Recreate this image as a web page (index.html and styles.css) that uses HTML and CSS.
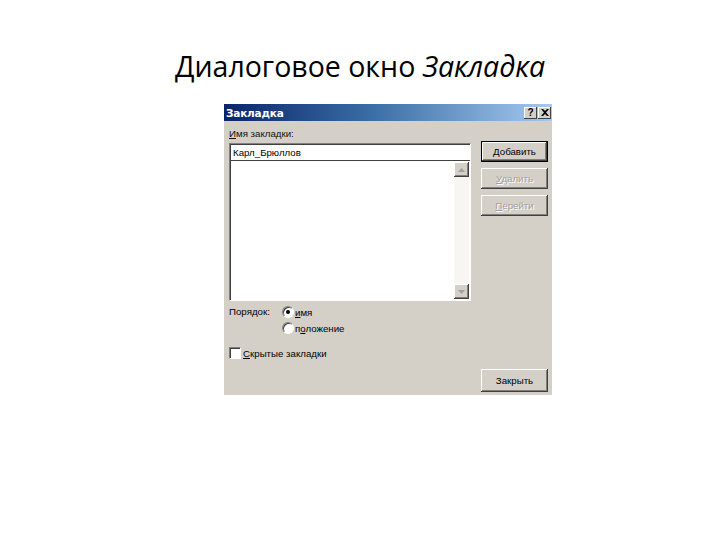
FILE: index.html
```html
<!DOCTYPE html>
<html lang="ru">
<head>
<meta charset="utf-8">
<link rel="stylesheet" href="styles.css">
</head>
<body>
<h1 class="slide-title">Диалоговое окно <em>Закладка</em></h1>
<div class="dialog">
  <div class="titlebar">
    <span class="title-text">Закладка</span>
    <div class="title-buttons">
      <span class="tb-btn">?</span>
      <span class="tb-btn tb-close">
        <svg width="8" height="7" viewBox="0 0 8 7"><path d="M0 0h2l2 2 2-2h2L5 3.5 8 7H6L4 5 2 7H0l3-3.5z" fill="#000"/></svg>
      </span>
    </div>
  </div>
  <div class="dlg-body">
    <div class="main-grid">
      <div class="left-col">
        <div class="label"><u>И</u>мя закладки:</div>
        <div class="textbox">Карл_Брюллов</div>
        <div class="listbox">
          <div class="list-area"></div>
          <div class="scrollbar">
            <div class="sb-btn">
              <svg width="7" height="4" viewBox="0 0 7 4"><path d="M3.5 0L7 4H0z" fill="#a0a0a0"/></svg>
            </div>
            <div class="sb-track"></div>
            <div class="sb-btn">
              <svg width="7" height="4" viewBox="0 0 7 4"><path d="M0 0h7L3.5 4z" fill="#a0a0a0"/></svg>
            </div>
          </div>
        </div>
      </div>
      <div class="right-col">
        <div class="btn btn-default"><span><u>Д</u>обавить</span></div>
        <div class="btn btn-disabled"><span><u>У</u>далить</span></div>
        <div class="btn btn-disabled"><span><u>П</u>ерейти</span></div>
      </div>
    </div>
    <div class="order">
      <div class="order-label">Порядок:</div>
      <div class="radios">
        <div class="radio-row"><span class="radio checked"></span><span><u>и</u>мя</span></div>
        <div class="radio-row"><span class="radio"></span><span>п<u>о</u>ложение</span></div>
      </div>
    </div>
    <div class="check-row"><span class="checkbox"></span><span><u>С</u>крытые закладки</span></div>
    <div class="bottom-row">
      <div class="btn"><span>Закрыть</span></div>
    </div>
  </div>
</div>
</body>
</html>
```
FILE: styles.css
```css
html, body {
  margin: 0;
  padding: 0;
  background: #ffffff;
}
body {
  width: 720px;
  height: 540px;
  overflow: hidden;
}
.slide-title {
  margin: 0;
  padding-top: 49px;
  height: 104px;
  box-sizing: border-box;
  text-align: center;
  font-family: "Open Sans", "DejaVu Sans", sans-serif;
  font-weight: 400;
  font-size: 28.5px;
  line-height: 34px;
  color: #000;
}
.slide-title em {
  font-style: italic;
}
.dialog {
  margin-left: 224px;
  width: 328px;
  height: 291px;
  background: #d4d0c8;
  font-family: "Liberation Sans", Arial, sans-serif;
  font-size: 9.7px;
  color: #000;
  box-sizing: border-box;
}
.titlebar {
  height: 17px;
  background: linear-gradient(to right, #0a246a 0%, #3a6ea5 45%, #a6caf0 100%);
  display: flex;
  align-items: center;
  justify-content: space-between;
  padding: 0 1px 0 2px;
}
.title-text {
  color: #fff;
  font-weight: bold;
  font-size: 10.5px;
  font-family: "DejaVu Sans", Tahoma, sans-serif;
  letter-spacing: -0.2px;
}
.title-buttons {
  display: flex;
  gap: 1px;
}
.tb-btn {
  width: 13px;
  height: 12px;
  background: #d4d0c8;
  box-shadow: inset -1px -1px #404040, inset 1px 1px #fff;
  display: flex;
  align-items: center;
  justify-content: center;
  font-weight: bold;
  font-size: 10px;
  line-height: 1;
}
.dlg-body {
  padding: 0 4px 0 5px;
}
.main-grid {
  display: flex;
  gap: 10px;
}
.left-col {
  width: 242px;
}
.label {
  margin-top: 7px;
  height: 12px;
  line-height: 12px;
  color: #111;
}
.textbox {
  margin-top: 3px;
  height: 17px;
  box-sizing: border-box;
  background: #fff;
  border-top: 1px solid #808080;
  border-left: 1px solid #808080;
  border-right: 1px solid #fff;
  box-shadow: inset 1px 1px #404040;
  padding: 2px 0 0 3px;
  line-height: 13px;
}
.listbox {
  height: 141px;
  box-sizing: border-box;
  background: #fff;
  border-left: 1px solid #808080;
  border-right: 1px solid #fff;
  border-bottom: 1px solid #fff;
  box-shadow: inset 1px 0 #404040, inset 0 1px #404040;
  display: flex;
  padding: 2px 1px 1px 1px;
}
.list-area {
  flex: 1;
}
.scrollbar {
  width: 15px;
  display: flex;
  flex-direction: column;
  background: #f7f6f3;
}
.sb-track {
  flex: 1;
}
.sb-btn {
  height: 15px;
  background: #d4d0c8;
  box-shadow: inset -1px -1px #404040, inset 1px 1px #fff, inset -2px -2px #808080;
  display: flex;
  align-items: center;
  justify-content: center;
}
.right-col {
  padding-top: 20px;
  width: 67px;
  display: flex;
  flex-direction: column;
  gap: 6px;
}
.btn {
  width: 67px;
  height: 21px;
  box-sizing: border-box;
  background: #d4d0c8;
  box-shadow: inset -1px -1px #404040, inset 1px 1px #fff, inset -2px -2px #808080;
  display: flex;
  align-items: center;
  justify-content: center;
  line-height: 12px;
}
.btn-default {
  border: 1px solid #000;
}
.btn-disabled {
  color: #a0a0a0;
  text-shadow: 1px 1px #fff;
}
.order {
  display: flex;
  margin-top: 3px;
}
.order-label {
  width: 53px;
  height: 16px;
  line-height: 16px;
}
.radios {
  display: flex;
  flex-direction: column;
}
.radio-row {
  height: 16px;
  display: flex;
  align-items: center;
  gap: 1px;
}
.radio {
  width: 12px;
  height: 12px;
  box-sizing: border-box;
  border-radius: 50%;
  background: #fff;
  border: 1px solid;
  border-color: #808080 #fff #fff #808080;
  box-shadow: inset 1px 1px #404040;
  position: relative;
}
.radio.checked::after {
  content: "";
  position: absolute;
  left: 3px;
  top: 3px;
  width: 4px;
  height: 4px;
  border-radius: 50%;
  background: #000;
}
.check-row {
  margin-top: 9px;
  height: 16px;
  display: flex;
  align-items: center;
  gap: 2px;
}
.checkbox {
  width: 12px;
  height: 12px;
  box-sizing: border-box;
  background: #fff;
  border: 1px solid;
  border-color: #808080 #fff #fff #808080;
  box-shadow: inset 1px 1px #404040;
}
.bottom-row {
  margin-top: 8px;
  display: flex;
  justify-content: flex-end;
}
.bottom-row .btn {
  height: 23px;
}
u {
  text-decoration: underline;
  text-underline-offset: 1px;
}
```
